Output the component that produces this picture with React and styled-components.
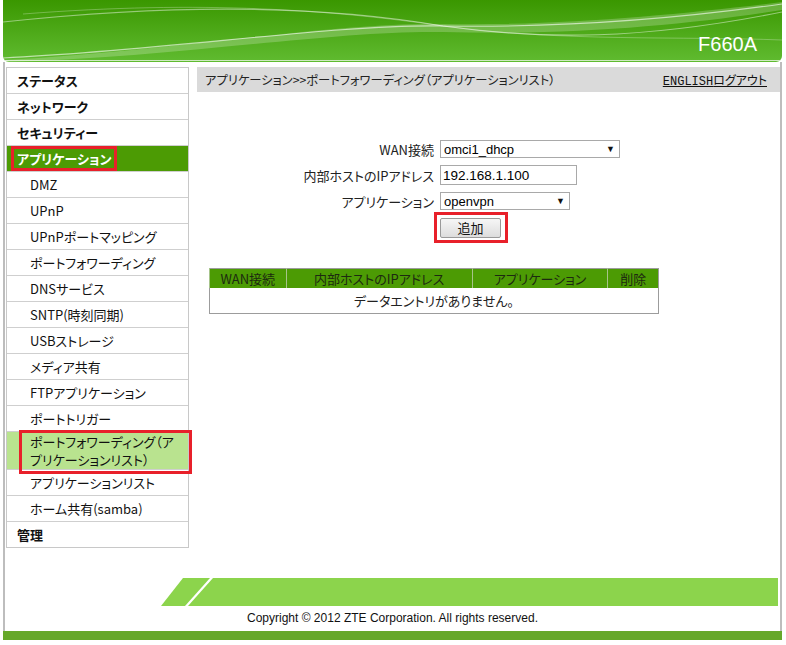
import React from "react";
import styled, { createGlobalStyle } from "styled-components";

const GlobalStyle = createGlobalStyle`
  body {
    margin: 0;
    background: #ffffff;
    font-family: "Noto Sans CJK JP", "Liberation Sans", sans-serif;
    font-feature-settings: "palt";
    color: #000;
  }
`;

const Page = styled.div`
  width: 779px;
  margin-left: 3px;
  display: flex;
  flex-direction: column;
`;

const Header = styled.div`
  position: relative;
  height: 62px;
  border-radius: 0 0 6px 6px;
  overflow: hidden;
  display: flex;
  justify-content: flex-end;
  align-items: flex-end;
  padding: 0 25px 7px 0;
  box-sizing: border-box;
`;

const HeaderArt = styled.svg`
  position: absolute;
  inset: 0;
  width: 100%;
  height: 100%;
`;

const Model = styled.div`
  position: relative;
  color: #ffffff;
  font-family: "Liberation Sans", Arial, sans-serif;
  font-size: 20px;
  line-height: 22px;
`;

const Frame = styled.div`
  border-left: 2px solid #bdbdbd;
  border-right: 2px solid #bdbdbd;
  display: flex;
  flex-direction: column;
  padding-top: 5px;
`;

const Body = styled.div`
  display: flex;
  align-items: flex-start;
  gap: 8px;
`;

const Sidebar = styled.div`
  width: 181px;
  margin-left: 1px;
  border: 1px solid #c8c8c8;
  display: flex;
  flex-direction: column;
`;

const MenuItem = styled.div`
  position: relative;
  display: flex;
  align-items: center;
  height: ${p => (p.$current ? "37px" : "25px")};
  padding-left: ${p => (p.$sub ? "23px" : p.$marked ? "4px" : "10px")};
  border-bottom: ${p => (p.$last ? "none" : "1px solid #cfcfcf")};
  font-size: 13px;
  font-weight: ${p => (p.$sub ? "normal" : "bold")};
  line-height: 18px;
  background: ${p =>
    p.$active ? "#4c9b04" : p.$current ? "#b9e38f" : "transparent"};
  color: ${p => (p.$active ? "#ffffff" : "#111")};
`;

const RedMark = styled.span`
  display: inline-flex;
  align-items: center;
  height: 25px;
  box-sizing: border-box;
  border: 3px solid #e8202a;
  padding: 0 3px;
`;

const RedOverlay = styled.div`
  position: absolute;
  left: 12px;
  right: -4px;
  top: -2px;
  bottom: -5px;
  border: 3px solid #e8202a;
  pointer-events: none;
`;

const Main = styled.div`
  flex: 1;
  display: flex;
  flex-direction: column;
`;

const Crumb = styled.div`
  height: 25px;
  background: #dadada;
  display: flex;
  align-items: center;
  justify-content: space-between;
  padding: 0 13px 0 8px;
  font-size: 12.3px;
  color: #222;
`;

const CrumbLinks = styled.a`
  color: #111;
  text-decoration: underline;
  font-size: 12px;
`;

const Mono = styled.span`
  font-family: "Liberation Mono", monospace;
  font-size: 12px;
`;

const Form = styled.div`
  margin: 44px 0 0 12px;
  display: grid;
  grid-template-columns: 225px auto;
  grid-auto-rows: 26px;
  column-gap: 6px;
  align-items: center;
  justify-items: start;
`;

const Label = styled.div`
  justify-self: end;
  font-size: 13px;
  color: #222;
`;

const SelectBox = styled.div`
  width: ${p => p.$w}px;
  height: 18px;
  box-sizing: border-box;
  border: 1px solid #a9a9a9;
  display: flex;
  align-items: center;
  justify-content: space-between;
  padding: 0 4px 0 3px;
  font-family: "Liberation Sans", Arial, sans-serif;
  font-size: 13px;
  color: #000;
`;

const Arrow = styled.span`
  font-size: 9px;
  color: #111;
`;

const TextInput = styled.input`
  width: 137px;
  height: 20px;
  box-sizing: border-box;
  border: 1px solid #a9a9a9;
  padding: 0 2px;
  font-family: "Liberation Sans", Arial, sans-serif;
  font-size: 13.5px;
  color: #000;
  outline: none;
`;

const ButtonMark = styled.div`
  grid-column: 2;
  margin-left: -6px;
  border: 3px solid #e8202a;
  padding: 3px 4px 2px 3px;
  display: flex;
`;

const AddButton = styled.button`
  width: 61px;
  height: 20px;
  border: 1px solid #9a9a9a;
  border-radius: 2px;
  background: linear-gradient(#f6f6f6, #dddddd);
  font-family: "Noto Sans CJK JP", sans-serif;
  font-size: 13px;
  line-height: 16px;
  padding: 0;
  color: #111;
`;

const Table = styled.table`
  margin: 28px 0 0 12px;
  width: 450px;
  border-collapse: collapse;
  border: 1px solid #9c9c9c;
  font-size: 13px;
`;

const Th = styled.th`
  background: #4c9b04;
  color: #1d2a10;
  font-weight: normal;
  height: 19px;
  padding: 0;
  width: ${p => p.$w}px;
  border-left: 1px solid #a6c48a;
  line-height: 17px;
`;

const Td = styled.td`
  height: 25px;
  text-align: center;
  color: #222;
  padding: 0;
`;

const Footer = styled.div`
  display: flex;
  flex-direction: column;
  align-items: stretch;
  margin-top: 30px;
`;

const Stripe = styled.svg`
  display: block;
  margin-left: 156px;
  width: 617px;
  height: 28px;
`;

const Copyright = styled.div`
  text-align: center;
  font-family: "Liberation Sans", Arial, sans-serif;
  font-size: 12px;
  line-height: 25px;
  color: #111;
`;

const BottomBar = styled.div`
  height: 9px;
  background: #66a82a;
`;

const menu = [
  { t: "ステータス" },
  { t: "ネットワーク" },
  { t: "セキュリティー" },
  { t: "アプリケーション", active: true },
  { t: "DMZ", sub: true },
  { t: "UPnP", sub: true },
  { t: "UPnPポートマッピング", sub: true },
  { t: "ポートフォワーディング", sub: true },
  { t: "DNSサービス", sub: true },
  { t: "SNTP(時刻同期)", sub: true },
  { t: "USBストレージ", sub: true },
  { t: "メディア共有", sub: true },
  { t: "FTPアプリケーション", sub: true },
  { t: "ポートトリガー", sub: true },
  { t: "current", sub: true, current: true },
  { t: "アプリケーションリスト", sub: true },
  { t: "ホーム共有(samba)", sub: true },
  { t: "管理", last: true }
];

export default () => {
  return (
    <Page>
      <GlobalStyle />
      <Header>
        <HeaderArt viewBox="0 0 779 62" preserveAspectRatio="none">
          <defs>
            <linearGradient id="hg" x1="0" y1="0" x2="0" y2="1">
              <stop offset="0" stopColor="#3a9700" />
              <stop offset="1" stopColor="#60bb30" />
            </linearGradient>
          </defs>
          <rect width="779" height="62" fill="url(#hg)" />
          <path
            d="M0,60 C160,52 330,22 440,24 C560,26 680,14 779,2 L779,10 C690,24 570,36 440,32 C330,30 170,58 0,62 Z"
            fill="#ffffff"
            opacity="0.22"
          />
          <path
            d="M0,22 C150,6 300,2 440,26 C540,40 640,40 779,12"
            fill="none"
            stroke="#ffffff"
            strokeWidth="1.2"
            opacity="0.45"
          />
          <path
            d="M0,58 C170,50 330,24 440,26 C560,28 680,18 779,4"
            fill="none"
            stroke="#ffffff"
            strokeWidth="1.2"
            opacity="0.6"
          />
          <path
            d="M20,14 C200,0 330,10 440,26 C560,42 680,36 779,40"
            fill="none"
            stroke="#ffffff"
            strokeWidth="0.8"
            opacity="0.35"
          />
          <line x1="0" y1="60.5" x2="779" y2="60.5" stroke="#ffffff" strokeWidth="1" opacity="0.7" />
        </HeaderArt>
        <Model>F660A</Model>
      </Header>
      <Frame>
        <Body>
          <Sidebar>
            {menu.map((m, i) => (
              <MenuItem
                key={i}
                $sub={m.sub}
                $active={m.active}
                $marked={m.active}
                $current={m.current}
                $last={m.last}
              >
                {m.active ? (
                  <RedMark>{m.t}</RedMark>
                ) : m.current ? (
                  <>
                    <span>
                      ポートフォワーディング（ア
                      <br />
                      プリケーションリスト）
                    </span>
                    <RedOverlay />
                  </>
                ) : (
                  m.t
                )}
              </MenuItem>
            ))}
          </Sidebar>
          <Main>
            <Crumb>
              <span>アプリケーション&gt;&gt;ポートフォワーディング（アプリケーションリスト）</span>
              <CrumbLinks>
                <Mono>ENGLISH</Mono>ログアウト
              </CrumbLinks>
            </Crumb>
            <Form>
              <Label>WAN接続</Label>
              <SelectBox $w={180}>
                <span>omci1_dhcp</span>
                <Arrow>▼</Arrow>
              </SelectBox>
              <Label>内部ホストのIPアドレス</Label>
              <TextInput defaultValue="192.168.1.100" />
              <Label>アプリケーション</Label>
              <SelectBox $w={130}>
                <span>openvpn</span>
                <Arrow>▼</Arrow>
              </SelectBox>
              <ButtonMark>
                <AddButton>追加</AddButton>
              </ButtonMark>
            </Form>
            <Table>
              <thead>
                <tr>
                  <Th $w={76}>WAN接続</Th>
                  <Th $w={187}>内部ホストのIPアドレス</Th>
                  <Th $w={136}>アプリケーション</Th>
                  <Th $w={50}>削除</Th>
                </tr>
              </thead>
              <tbody>
                <tr>
                  <Td colSpan={4}>データエントリがありません。</Td>
                </tr>
              </tbody>
            </Table>
          </Main>
        </Body>
        <Footer>
          <Stripe viewBox="0 0 617 28">
            <polygon points="0,28 22,0 49,0 24,28" fill="#8cd44c" />
            <polygon points="27,28 52,0 617,0 617,28" fill="#8cd44c" />
          </Stripe>
          <Copyright>Copyright © 2012 ZTE Corporation. All rights reserved.</Copyright>
        </Footer>
      </Frame>
      <BottomBar />
    </Page>
  );
};
